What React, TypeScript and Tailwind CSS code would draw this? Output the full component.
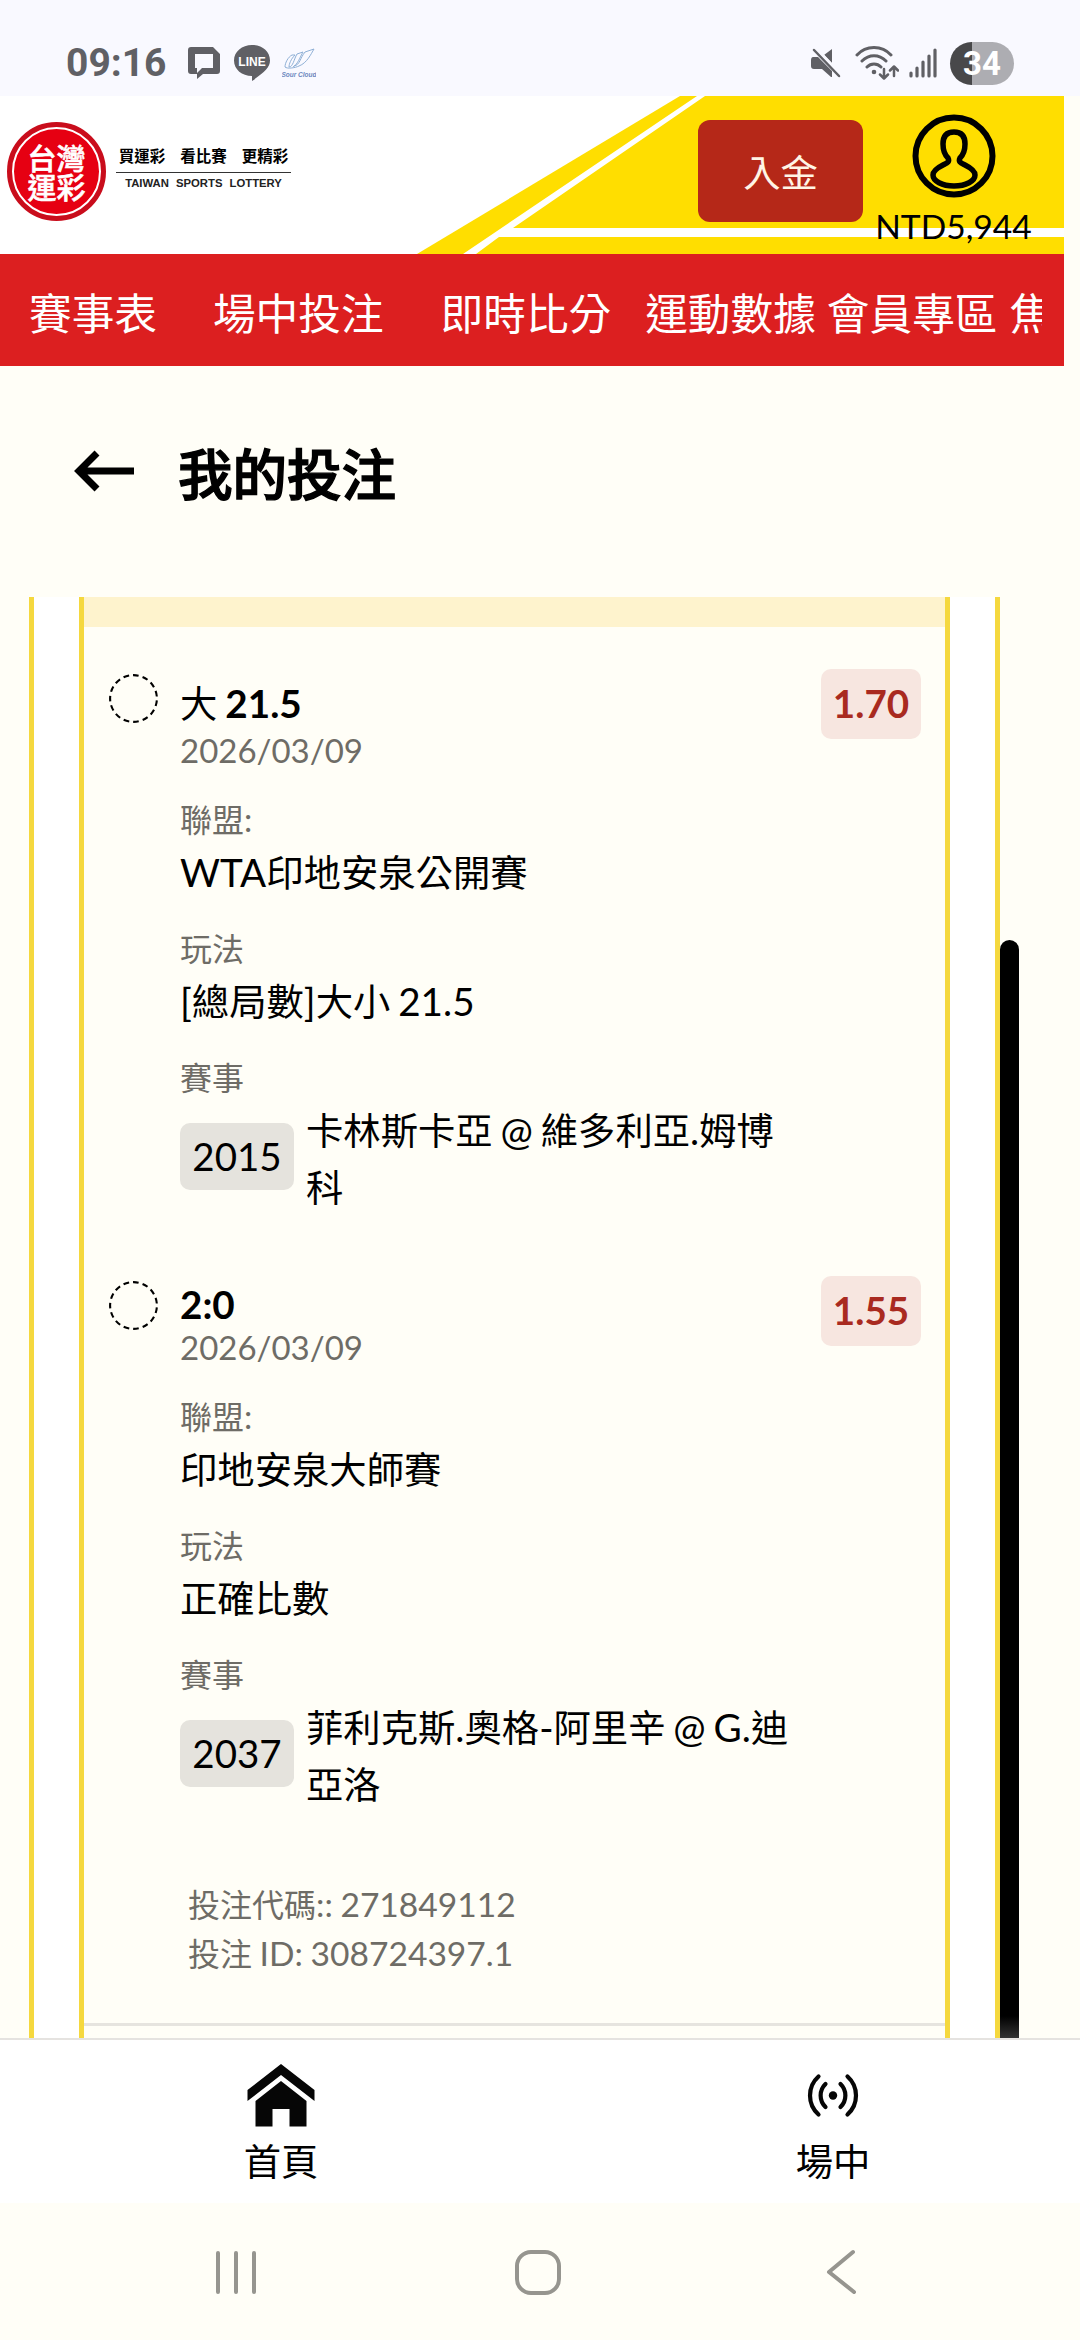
import { Fragment } from 'react';

const bets = [
    {
        pick: '大 21.5',
        date: '2026/03/09',
        odds: '1.70',
        league: 'WTA印地安泉公開賽',
        market: '[總局數]大小 21.5',
        eventNo: '2015',
        event: '卡林斯卡亞 @ 維多利亞.姆博科',
        tall: true,
    },
    {
        pick: '2:0',
        date: '2026/03/09',
        odds: '1.55',
        league: '印地安泉大師賽',
        market: '正確比數',
        eventNo: '2037',
        event: '菲利克斯.奧格-阿里辛 @ G.迪亞洛',
        tall: false,
    },
];

// latin runs are set slightly larger than the chinese ones
const Mixed = ({ text }: { text: string }) => (
    <>
        {text.split(/([\u4e00-\u9fff]+)/).map((part: string, index: number) =>
            /[\u4e00-\u9fff]/.test(part) ? (
                <Fragment key={index}>{part}</Fragment>
            ) : (
                <span key={index} className="text-[1.035em] [word-spacing:-2px]">
                    {part}
                </span>
            )
        )}
    </>
);

const StatusBar = () => (
    <div className="h-24 bg-[#f9f9ff] flex items-center justify-between pl-[66px] pr-[66px] pt-[30px] text-[#606065]">
        <div className="flex items-center">
            <span className="font-[Roboto] font-bold text-[39px] leading-none w-[122px]">09:16</span>
            <svg className="w-[32px] h-[34px]" viewBox="0 0 32 34">
                <path fill="currentColor" fillRule="evenodd" d="M3 1h22l7 7v17a3 3 0 0 1-3 3H15l-6 5v-5H3a3 3 0 0 1-3-3V4a3 3 0 0 1 3-3zM7 8v14h2v5l5-5h11V8z" />
            </svg>
            <svg className="w-[36px] h-[36px] ml-[14px]" viewBox="0 0 36 36">
                <path fill="currentColor" d="M18 0c9.900 0 18 6.500 18 15.500 0 7-6 12-18 20.500v-5C8 31 0 24.500 0 15.500S8 0 18 0z" />
                <text x="18" y="20.500" textAnchor="middle" fill="#fff" className="font-['Liberation_Sans'] font-bold text-[12px]">
                    LINE
                </text>
            </svg>
            <svg className="w-[34px] h-[32px] ml-[12px]" viewBox="0 0 34 32" fill="none" stroke="#8fb0d6" strokeWidth="1">
                <path d="M3 20c0-4 3-10 7-12l3 0c-4 4-6 9-6 12M7 20c4 0 5-8 8-13l6-2c-3 5-5 12-10 15M12 19c6-1 6-8 11-14l9-3c-3 5-7 14-15 17-4 2-12 3-14 1" />
                <text x="17" y="30" textAnchor="middle" stroke="none" fill="#6d88c0" className="font-['Liberation_Sans'] font-bold italic text-[6.500px]">
                    Sour Cloud
                </text>
            </svg>
        </div>
        <div className="flex items-center">
            <svg className="w-[30px] h-[32px]" viewBox="0 0 30 32">
                <path fill="currentColor" d="M21 2v14L13 8zM2 10h5l14 14v6h-1l-9-8H3c-2 0-3-1-3-3v-6c0-2 1-3 2-3z" />
                <path stroke="#f9f9ff" strokeWidth="3" d="M5 1l25 27" />
                <path stroke="currentColor" strokeWidth="2.500" strokeLinecap="round" d="M3 3l25 26" />
            </svg>
            <svg className="w-[44px] h-[36px] ml-[14px]" viewBox="0 0 44 36" fill="none" stroke="currentColor" strokeWidth="3" strokeLinecap="round">
                <path d="M2 10c9-10 25-10 34 0M7 16c7-7 17-7 24 0M12 22c4-4 10-4 14 0" />
                <circle cx="19" cy="27" r="2.300" fill="currentColor" stroke="none" />
                <path strokeWidth="2.500" strokeLinejoin="round" d="M29 24v9M25 29.500l4 4 4-4M39 31v-9M35 25.500l4-4 4 4" />
            </svg>
            <svg className="w-[28px] h-[30px] ml-[10px]" viewBox="0 0 28 30" stroke="currentColor" strokeWidth="3.200" strokeLinecap="round">
                <path d="M2 25v3M8 20v8M14 14v14M20 8v20M26 2v26" />
            </svg>
            <div className="ml-[13px] w-[64px] h-[43px] rounded-full bg-[linear-gradient(90deg,#48484a_34%,#adadb2_34%)] text-white font-[Roboto] font-bold text-[33px] leading-[43px] text-center">34</div>
        </div>
    </div>
);

const Header = () => (
    <header className="relative h-[158px] w-[1064px] bg-white flex items-start">
        <svg className="absolute inset-0 w-full h-full" viewBox="0 96 1064 158">
            <path fill="#ffde00" d="M680 96H1064V254H417z" />
            <path fill="#fff" d="M697 96H705L513 228H1064V237H499L476 254H463z" />
        </svg>
        <div className="relative w-[99px] h-[99px] mt-[26px] ml-[7px] rounded-full bg-[#e60012] border-[5px] border-[#c90d1c] flex items-center justify-center">
            <div className="w-full h-full rounded-full border-2 border-white flex flex-col items-center justify-center font-['Noto_Sans_CJK_TC',sans-serif] font-medium text-[29px] leading-[29px] text-white [-webkit-text-stroke:0.6px_white] shrink-0">
                <span>台灣</span>
                <span>運彩</span>
            </div>
        </div>
        <div className="relative ml-[10px] mt-[46px] w-[175px] flex flex-col items-center">
            <div className="flex gap-[15px] pb-[3px] font-['Noto_Sans_CJK_TC',sans-serif] font-bold text-[15.500px] leading-[27px] text-black">
                <span>買運彩</span>
                <span>看比賽</span>
                <span>更精彩</span>
            </div>
            <div className="w-full h-px bg-[#333]"></div>
            <div className="mt-[3px] font-['Liberation_Sans',sans-serif] font-bold text-[11.300px] leading-[14px] [word-spacing:4px] whitespace-nowrap text-[#222]">TAIWAN SPORTS LOTTERY</div>
        </div>
        <button className="relative ml-[407px] mt-[24px] w-[165px] h-[102px] rounded-[12px] bg-[#b52818] text-[#fff5e6] text-[37.330px] leading-[102px] pt-[2px]">入金</button>
        <div className="relative ml-[12px] mt-[17px] w-[157px] flex flex-col items-center">
            <svg className="w-[86px] h-[86px]" viewBox="0 0 86 86" fill="none" stroke="#000" strokeWidth="6">
                <circle cx="43" cy="43" r="38.500" />
                <path strokeWidth="5.500" strokeLinejoin="round" d="M43 19c-8 0-11 5-11 12 0 6 2 11 5 14 2 4-1 5-5 7-6 3-10 6-10 10 0 6 9 11 21 11s21-5 21-11c0-4-4-7-10-10-4-2-7-3-5-7 3-3 5-8 5-14 0-7-3-12-11-12z" />
            </svg>
            <span className="text-[33.600px] leading-[40px] mt-[7px] text-black">NTD5,944</span>
        </div>
    </header>
);

const NavBar = () => (
    <nav className="h-[112px] w-[1064px] bg-[#dc1f20] pl-[29px] pr-[22px]">
        <div className="flex overflow-hidden whitespace-nowrap text-white text-[42.670px] h-[112px] leading-[120px]">
            <span className="mr-[56px]">賽事表</span>
            <span className="mr-[57px]">場中投注</span>
            <span className="mr-[34px]">即時比分</span>
            <span className="mr-[11px]">運動數據</span>
            <span className="mr-[12px]">會員專區</span>
            <span>焦點</span>
        </div>
    </nav>
);

const BetRow = ({ bet }: { bet: any }) => (
    <div className="flex items-start pl-[25px] pr-[24px]">
        <svg className="w-[49px] h-[49px] mt-[5px]" viewBox="0 0 49 49" fill="none" stroke="#000" strokeWidth="2.100">
            <circle cx="24.500" cy="24.500" r="23.400" pathLength="240" strokeDasharray="9.400 6.600" strokeDashoffset="-3.200" />
        </svg>
        <div className="ml-[22px] w-[615px] flex flex-col">
            <div className={bet.tall ? 'h-[61px] pt-[4px] text-[37.330px] leading-[60px]' : 'h-[51px] text-[37.330px] leading-[56px]'}>
                {bet.pick.split(' ').map((part: string, index: number) => (
                    <span key={index} className={/\d/.test(part) ? 'font-bold text-[1.035em]' : 'mr-[8px]'}>
                        {part}
                    </span>
                ))}
            </div>
            <div className="text-[33px] leading-[40px] text-[#6e6c66]">{bet.date}</div>
            <div className="mt-[26px] text-[32px] leading-[46px] text-[#6e6c66]"><Mixed text="聯盟:" /></div>
            <div className="text-[37.330px] leading-[58px]"><Mixed text={bet.league} /></div>
            <div className="mt-[24px] text-[32px] leading-[46px] text-[#6e6c66]">玩法</div>
            <div className="text-[37.330px] leading-[58px]"><Mixed text={bet.market} /></div>
            <div className="mt-[24px] text-[32px] leading-[46px] text-[#6e6c66]">賽事</div>
            <div className="mt-[1px] flex items-start text-[37.330px]">
                <span className="mt-[21px] w-[114px] h-[67px] shrink-0 rounded-[10px] bg-[#e5e3dd] text-center text-[38.500px] leading-[66px]">{bet.eventNo}</span>
                <span className="ml-[12px] w-[490px] leading-[57px]"><Mixed text={bet.event} /></span>
            </div>
        </div>
        <div className="ml-auto w-[100px] h-[70px] rounded-[10px] bg-[#f7e6e0] text-center font-bold text-[38.600px] leading-[69px] text-[#a92a20]">{bet.odds}</div>
    </div>
);

const BottomTabs = () => (
    <div className="h-[165px] border-t-2 border-[#e5e3e0] bg-white flex justify-between pl-[181px] pr-[147px] text-[37.330px] text-black">
        <div className="w-[200px] flex flex-col items-center pt-[23px]">
            <svg className="w-[68px] h-[64px]" viewBox="0 0 68 64" fill="#060606">
                <path d="M34 1L67.500 27V38L34 12 .5 38V27z" />
                <path d="M34 18L59.500 38V63.500H42.500V46H25.500V63.500H8.500V38z" />
            </svg>
            <span className="leading-[54px] mt-[8px]">首頁</span>
        </div>
        <div className="w-[200px] flex flex-col items-center pt-[23px]">
            <svg className="w-[64px] h-[64px]" viewBox="-32 -32.500 64 64" fill="none" stroke="#060606" strokeWidth="4.200" strokeLinecap="round">
                <circle r="4.200" fill="#060606" stroke="none" />
                <path d="M-7.500-11.500a16 16 0 0 0 0 23M7.500-11.500a16 16 0 0 1 0 23M-14.500-19a25.500 25.500 0 0 0 0 38M14.500-19a25.500 25.500 0 0 1 0 38" />
            </svg>
            <span className="leading-[54px] mt-[8px]">場中</span>
        </div>
    </div>
);

const SystemNav = () => (
    <div className="h-[137px] flex items-center pl-[214px]">
        <svg className="w-[44px] h-[48px]" viewBox="0 0 44 48" stroke="#96958f" strokeWidth="4" strokeLinecap="round">
            <path d="M4 5v39M22 5v39M40 5v39" />
        </svg>
        <svg className="w-[48px] h-[48px] ml-[256px]" viewBox="0 0 48 48" fill="none" stroke="#96958f" strokeWidth="4">
            <rect x="3" y="4" width="42" height="41" rx="14" />
        </svg>
        <svg className="w-[32px] h-[48px] ml-[263px]" viewBox="0 0 32 48" fill="none" stroke="#96958f" strokeWidth="4" strokeLinecap="round" strokeLinejoin="round">
            <path d="M28 4L4 24l25 20" />
        </svg>
    </div>
);

const App = () => {
    return (
        <div className="w-[1080px] h-[2340px] overflow-hidden flex flex-col bg-[#fffef7] text-black font-['Lato','Noto_Sans_CJK_TC',sans-serif]">
            <StatusBar />
            <Header />
            <NavBar />
            <div className="h-[231px] flex items-start pl-[73px] pt-[78px]">
                <svg className="w-[62px] h-[44px] mt-[5px]" viewBox="0 0 62 44" fill="none" stroke="#000" strokeWidth="7">
                    <path d="M61 22H6M24 4L6 22l18 18" />
                </svg>
                <h1 className="ml-[43px] font-medium [-webkit-text-stroke:1.4px_black] text-[54.500px] leading-[60px]">我的投注</h1>
            </div>
            <div className="h-[1441px] flex items-start overflow-hidden">
                <div className="ml-[29px] w-[971px] h-full border-x-[5px] border-[#f5d83e] bg-white px-[45px]">
                    <div className="h-full border-x-[5px] border-[#f5d83e] bg-[#fffef7]">
                        <div className="h-[30px] bg-[#fef3cd]"></div>
                        <div className="pt-[42px] flex flex-col h-[1399px] border-b-[3px] border-[#e6e4df]">
                            {bets.map((bet: any, index: number) => (
                                <div key={index} className={index === 0 ? 'h-[607px]' : 'h-[598px]'}>
                                    <BetRow bet={bet} />
                                </div>
                            ))}
                            <div className="pl-[104px] pt-[6px] text-[32px] leading-[49px] text-[#6e6c66]">
                                <div>投注代碼<span className="text-[33.600px] [word-spacing:-1px]">:: 271849112</span></div>
                                <div>投注<span className="text-[33.600px] [word-spacing:-1px]"> ID: 308724397.1</span></div>
                            </div>
                        </div>
                    </div>
                </div>
                <div className="mt-[343px] w-[19px] h-[1098px] rounded-t-full bg-[linear-gradient(180deg,#000_98%,#333_100%)]"></div>
            </div>
            <BottomTabs />
            <SystemNav />
        </div>
    );
};

export default App;
